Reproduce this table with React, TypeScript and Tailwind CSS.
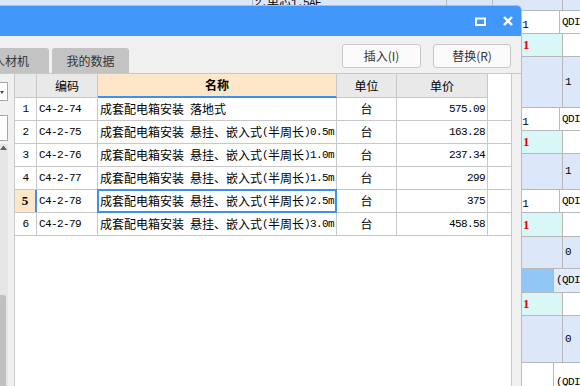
import React from "react";

type Row = [string, string, string, string, string];

const rows: Row[] = [
  ["1", "C4-2-74", "成套配电箱安装 落地式", "台", "575.09"],
  ["2", "C4-2-75", "成套配电箱安装 悬挂、嵌入式(半周长)0.5m", "台", "163.28"],
  ["3", "C4-2-76", "成套配电箱安装 悬挂、嵌入式(半周长)1.0m", "台", "237.34"],
  ["4", "C4-2-77", "成套配电箱安装 悬挂、嵌入式(半周长)1.5m", "台", "299"],
  ["5", "C4-2-78", "成套配电箱安装 悬挂、嵌入式(半周长)2.5m", "台", "375"],
  ["6", "C4-2-79", "成套配电箱安装 悬挂、嵌入式(半周长)3.0m", "台", "458.58"],
];

// Mixed CJK / ASCII text: ASCII runs are half-width like a Song-style grid font.
function Mixed({ text }: { text: string }) {
  const parts = text.split(/([\x20-\x7e]+)/).filter(Boolean);
  return (
    <>
      {parts.map((p, i) =>
        /^[\x20-\x7e]+$/.test(p) ? (
          <span
            key={i}
            className="font-['Liberation_Mono'] text-[11px] tracking-[-0.6px] whitespace-pre"
          >
            {p}
          </span>
        ) : (
          <span key={i} className="font-['Noto_Sans_CJK_SC',sans-serif] text-[12px]">
            {p}
          </span>
        )
      )}
    </>
  );
}

type BgRow = {
  h: string;
  c: string;
  d: string;
  cText?: string;
  cRed?: boolean;
  dText?: string;
};

const bgRows: BgRow[] = [
  { h: "h-[23px]", c: "bg-white", d: "bg-white", cText: "1", dText: "QDI" },
  { h: "h-[23px]", c: "bg-[#d9f7f7]", d: "bg-white", cText: "1", cRed: true },
  { h: "h-[51px]", c: "bg-[#dce8fa]", d: "bg-[#dce8fa]", dText: "1" },
  { h: "h-[23px]", c: "bg-white", d: "bg-white", cText: "1", dText: "QDI" },
  { h: "h-[23px]", c: "bg-[#d9f7f7]", d: "bg-white", cText: "1", cRed: true },
  { h: "h-[36px]", c: "bg-[#dce8fa]", d: "bg-[#dce8fa]", dText: "1" },
  { h: "h-[23px]", c: "bg-white", d: "bg-white", cText: "1", dText: "QDI" },
  { h: "h-[24px]", c: "bg-[#d9f7f7]", d: "bg-white", cText: "1", cRed: true },
  { h: "h-[32px]", c: "bg-[#dce8fa]", d: "bg-[#dce8fa]", dText: "0" },
  { h: "h-[24px]", c: "bg-[#91c7f6]", d: "bg-[#e3ecfa]", dText: "(QDI" },
  { h: "h-[23px]", c: "bg-[#d9f7f7]", d: "bg-white", cText: "1", cRed: true },
  { h: "h-[47px]", c: "bg-[#dce8fa]", d: "bg-[#dce8fa]", dText: "0" },
  { h: "h-[40px]", c: "bg-white", d: "bg-white", dText: "(QDI" },
];

function BackSheet() {
  return (
    <div className="flex flex-col w-[580px] h-[386px] overflow-hidden bg-white">
      <div className="flex h-[11px] shrink-0 border-b border-[#b8b8b8] bg-[#dce8fa] overflow-hidden">
        <div className="w-[253px] border-r border-[#b8b8b8]" />
        <div className="w-[194px] border-r border-[#b8b8b8] pl-[2px] overflow-hidden">
          <div className="-mt-[6px] leading-[12px] text-black">
            <Mixed text="2.单芯1.5AE" />
          </div>
        </div>
        <div className="w-[46px] border-r border-[#b8b8b8]" />
        <div className="w-[70px] border-r border-[#b8b8b8]" />
        <div className="flex-1" />
      </div>
      {bgRows.map((r, i) => (
        <div key={i} className={`flex shrink-0 border-b border-[#b8b8b8] ${r.h}`}>
          <div className="w-[522px]" />
          <div className={`w-[41px] border-r border-[#b8b8b8] flex items-center pl-[1px] ${r.c}`}>
            {r.cText &&
              (r.cRed ? (
                <span className="font-['Liberation_Serif'] font-bold text-[13px] text-[#ee0000]">
                  {r.cText}
                </span>
              ) : (
                <span className="pl-[2px] text-black">
                  <Mixed text={r.cText} />
                </span>
              ))}
          </div>
          <div className={`flex-1 flex items-center pl-[2px] text-black ${r.d}`}>
            {r.dText && <Mixed text={r.dText} />}
          </div>
        </div>
      ))}
    </div>
  );
}

function HeaderCell({
  w,
  children,
  className = "",
}: {
  w: string;
  children?: React.ReactNode;
  className?: string;
}) {
  return (
    <div
      className={`${w} h-full border-r border-[#c8c8c8] flex items-center justify-center font-['Noto_Sans_CJK_SC',sans-serif] text-[12px] text-black ${className}`}
    >
      {children}
    </div>
  );
}

function Grid() {
  return (
    <div className="flex flex-col">
      {/* header */}
      <div className="flex h-[24px]">
        <div className="w-[22px] h-full border-r border-b border-[#c8c8c8] bg-[#e9e9e9]" />
        <HeaderCell w="w-[61px]" className="bg-[#e9e9e9] border-b">
          编码
        </HeaderCell>
        <div className="w-[239px] h-full border-r border-[#c8c8c8] border-b-2 border-b-[#3d8ff0] bg-[#fee6c8] flex items-center justify-center font-['Noto_Sans_CJK_SC',sans-serif] text-[12px] font-bold text-black">
          名称
        </div>
        <HeaderCell w="w-[60px]" className="bg-[#e9e9e9] border-b">
          单位
        </HeaderCell>
        <HeaderCell w="w-[91px]" className="bg-[#e9e9e9] border-b">
          单价
        </HeaderCell>
      </div>
      {rows.map((r) => {
        const sel = r[0] === "5";
        return (
          <div key={r[0]} className="flex h-[23px] border-b border-[#c8c8c8] text-black">
            <div
              className={
                sel
                  ? "w-[22px] h-full border-r-2 border-[#3d8ff0] bg-[#fee6c8] flex items-center justify-center font-['Liberation_Serif'] font-bold text-[13px]"
                  : "w-[22px] h-full border-r border-[#c8c8c8] flex items-center justify-center"
              }
            >
              {sel ? r[0] : <Mixed text={r[0]} />}
            </div>
            <div className="w-[61px] h-full border-r border-[#c8c8c8] flex items-center pl-[2px]">
              <Mixed text={r[1]} />
            </div>
            <div className="relative w-[239px] h-full border-r border-[#c8c8c8] flex items-center pl-[2px] whitespace-nowrap">
              <Mixed text={r[2]} />
              {sel && (
                <div className="absolute -left-[1px] -top-[1px] -right-[1px] -bottom-[1px] border-2 border-[#3d8ff0]" />
              )}
            </div>
            <div className="w-[60px] h-full border-r border-[#c8c8c8] flex items-center justify-center">
              <Mixed text={r[3]} />
            </div>
            <div className="w-[91px] h-full border-r border-[#c8c8c8] flex items-center justify-end pr-[2px]">
              <Mixed text={r[4]} />
            </div>
          </div>
        );
      })}
    </div>
  );
}

function Dialog() {
  return (
    <div className="absolute left-0 top-[5px] w-[522px] h-[381px] flex flex-col border-t border-r border-[#bcbcbc] rounded-tr-[5px] bg-[#f0f0f0] overflow-hidden">
      {/* title bar */}
      <div className="h-[30px] shrink-0 bg-[#4197fa] flex items-center justify-end gap-[17px] pr-[8px]">
        <svg width="11" height="9" viewBox="0 0 11 9" className="mt-[1px]">
          <rect x="1" y="1.5" width="9" height="6.5" fill="none" stroke="#fff" strokeWidth="2" />
        </svg>
        <svg width="10" height="10" viewBox="0 0 10 10">
          <path d="M1 1 L9 9 M9 1 L1 9" stroke="#fff" strokeWidth="2.4" />
        </svg>
      </div>

      {/* tabs + buttons */}
      <div className="h-[38px] shrink-0 flex border-b border-[#c8c8c8] pr-[10px]">
        <div className="flex items-end gap-[3px] pt-[12px]">
          <div className="h-[25px] w-[64px] -ml-[15px] rounded-t-[3px] bg-[#c3c3c3] flex items-center pl-[8px] font-['Noto_Sans_CJK_SC',sans-serif] text-[12px] text-[#333]">
            人材机
          </div>
          <div className="h-[25px] w-[77px] rounded-t-[3px] bg-[#c3c3c3] flex items-center justify-center font-['Noto_Sans_CJK_SC',sans-serif] text-[12px] text-[#333]">
            我的数据
          </div>
        </div>
        <div className="ml-auto flex gap-[12px] pt-[8px]">
          <button className="h-[24px] w-[79px] rounded-[3px] border border-[#c8c8c8] bg-[#fbfbfb] font-['Noto_Sans_CJK_SC',sans-serif] text-[12px] text-[#333]">
            插入(I)
          </button>
          <button className="h-[24px] w-[78px] rounded-[3px] border border-[#c8c8c8] bg-[#fbfbfb] font-['Noto_Sans_CJK_SC',sans-serif] text-[12px] text-[#333]">
            替换(R)
          </button>
        </div>
      </div>

      {/* content */}
      <div className="flex-1 flex pr-[9px] min-h-0">
        {/* collapsed left panel */}
        <div className="w-[14px] shrink-0 flex flex-col">
          <div className="relative mt-[8px] h-[19px] w-[8px] bg-white border-y border-r border-[#a9a9a9]">
            <svg width="4" height="3" viewBox="0 0 4 3" className="absolute left-0 top-[8px]">
              <path d="M0 0 H4 L2 3 Z" fill="#444" />
            </svg>
          </div>
          <div className="mt-[14px] h-[26px] w-[8px] bg-white border-y border-r border-[#a9a9a9]" />
          <div className="mt-[3px] flex-1 w-[8px] bg-[#e6e6e6] flex flex-col">
            <svg width="7" height="5" viewBox="0 0 7 5" className="mt-[1px]">
              <path d="M0 5 L3.5 0.5 L7 5 Z" fill="#606060" />
            </svg>
            <div className="flex-1" />
            <div className="h-[91px] w-[6px] bg-[#c0c0c0] rounded-tr-[3px]" />
          </div>
        </div>
        {/* grid frame */}
        <div className="flex-1 bg-white border-x border-[#c8c8c8]">
          <Grid />
        </div>
      </div>
    </div>
  );
}

export default function App() {
  return (
    <div className="relative w-[580px] h-[386px] overflow-hidden">
      <BackSheet />
      <Dialog />
    </div>
  );
}
